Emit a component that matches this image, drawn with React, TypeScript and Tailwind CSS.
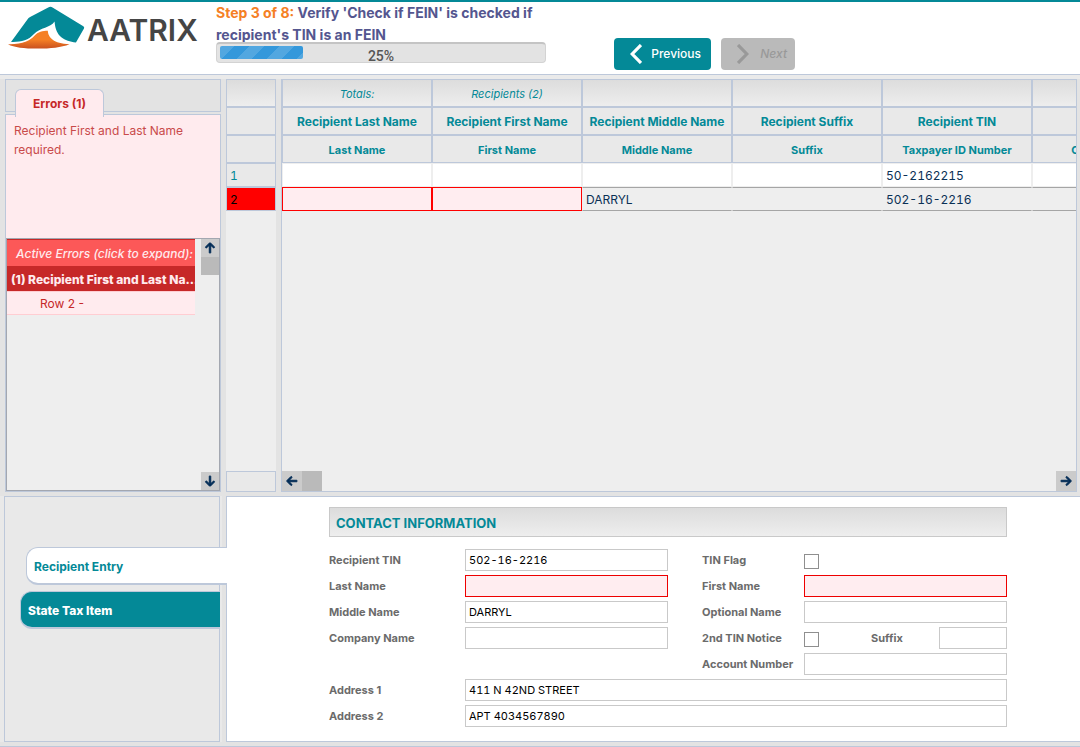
import React, { useState } from "react"
import { FaArrowDown, FaArrowLeft, FaArrowRight, FaArrowUp } from "react-icons/fa6";

type Column = {
    title: string;
    label: string;
    total?: string;
};

const COLUMNS: Column[] = [
    { title: "Recipient Last Name", label: "Last Name", total: "Totals:" },
    { title: "Recipient First Name", label: "First Name", total: "Recipients (2)" },
    { title: "Recipient Middle Name", label: "Middle Name" },
    { title: "Recipient Suffix", label: "Suffix" },
    { title: "Recipient TIN", label: "Taxpayer ID Number" },
    { title: "", label: "Check if FEIN" },
];

const ROWS = [
    ["", "", "", "", "50-2162215", ""],
    ["", "", "DARRYL", "", "502-16-2216", ""],
];

const headCell = "h-7 border border-[#bdc8da] px-0 pt-0.5 pb-0 text-center whitespace-nowrap text-[#048997]";
const scrollButton = "flex items-center justify-center bg-[#cbcbcb] text-[#002b55] text-xs";
const arrow = "stroke-current stroke-40";

function Logo() {
    return (
        <div className="flex w-52 shrink-0 items-start pl-2 pt-1">
            <svg className="h-[43px] w-[77px]" viewBox="22 18 230 128" aria-hidden="true">
                <defs>
                    <linearGradient id="flame" x1="0" y1="0" x2="0" y2="1">
                        <stop offset="0.5" stopColor="#f58025" />
                        <stop offset="1" stopColor="#c9501f" />
                    </linearGradient>
                </defs>
                <path fill="#048997" d="M31 125 L80 58 Q83 54 88 51 L145 21 Q150 19 155 22 L247 78 Q251 81 249 85 L225 127 C190 121 165 112 161 64 C148 84 120 80 98 103 C83 120 60 126 31 125Z" />
                <path fill="url(#flame)" d="M22 132 C65 133 88 122 101 107 C111 95 126 92 141 92 C142 112 158 131 206 132 C180 142 150 145 110 145 C70 145 40 142 22 132Z" />
            </svg>
            <span className="ml-0.5 pt-2 text-3xl leading-8 font-semibold text-[#454545]">AATRIX</span>
        </div>
    )
}

function Header() {
    return (
        <header className="flex h-[75px] shrink-0 border-t-2 border-b border-t-[#048997] border-b-[#bdc8da] bg-white">
            <Logo />
            <div className="ml-2 w-[330px] shrink-0">
                <h1 className="text-sm leading-[22px] font-bold text-[#54568f]">
                    <span className="text-[#f58025]">Step 3 of 8:</span> Verify 'Check if FEIN' is checked if recipient's TIN is an FEIN
                </h1>
                <div className="relative -mt-1 flex h-[21px] rounded-sm border border-t-2 border-[#d3d3d3] border-t-[#c4c4c4] bg-[#e3e3e3] px-[3px] py-0.5">
                    <div className="h-[13px] w-[83px] rounded-xs bg-[#3498db] bg-[linear-gradient(135deg,#ffffff26_25%,transparent_25%,transparent_50%,#ffffff26_50%,#ffffff26_75%,transparent_75%)] bg-size-[30px_30px]" />
                    <span className="absolute inset-x-0 top-0.5 text-center font-['Roboto',sans-serif] text-sm leading-5 font-medium text-[#555]">25%</span>
                </div>
            </div>
            <div className="ml-17 flex items-start gap-2.5 pt-9">
                <button className="flex h-8 w-[97px] items-center justify-between rounded-sm bg-[#048997] pr-2.5 pl-4 text-xs font-medium text-white">
                    <svg className="h-5 w-3" viewBox="0 0 12 20" fill="none" stroke="currentColor" strokeWidth="3.2" aria-hidden="true">
                        <path d="M11 1 L2.2 10 L11 19" />
                    </svg>
                    Previous
                </button>
                <button className="flex h-8 w-[74px] items-center justify-between rounded-sm bg-[#bababa] pr-2 pl-4 text-xs font-medium text-[#999] italic" disabled>
                    <svg className="h-5 w-3" viewBox="0 0 12 20" fill="none" stroke="currentColor" strokeWidth="3.2" aria-hidden="true">
                        <path d="M1 1 L9.8 10 L1 19" />
                    </svg>
                    Next
                </button>
            </div>
        </header>
    )
}

function ErrorPanel() {
    return (
        <aside className="flex w-[216px] shrink-0 flex-col">
            <div className="h-[33px] shrink-0 border border-[#bdc8da] px-[9px] pt-[9px]">
                <button className="relative h-7 w-[89px] rounded-t-md border border-b-0 border-[#bdc8da] bg-[#ffebee] text-xs font-bold text-[#c62828]">Errors (1)</button>
            </div>
            <div className="mt-0.5 flex grow flex-col border border-[#bdc8da] bg-[#ffebee]">
                <p className="h-[123px] shrink-0 px-2 pt-1.5 text-xs leading-[19px] text-[#c94a4a]">Recipient First and Last Name required.</p>
                <div className="flex grow border border-[#a3a7b0] bg-[#eee]">
                    <div className="min-w-0 grow text-xs">
                        <div className="h-[27px] border-t border-[#c62828] bg-[#fc5858] pr-0.5 text-right leading-7 font-medium whitespace-nowrap text-[#ffebee] italic">Active Errors (click to expand):</div>
                        <button className="block h-[25px] w-full overflow-hidden bg-[#c62828] pl-1 text-left leading-[27px] font-extrabold whitespace-nowrap text-[#ffebee]">(1) Recipient First and Last Na...</button>
                        <button className="block h-6 w-full border-y border-[#ffcdd2] bg-[#ffebee] pt-0.5 pl-[33px] text-left text-[#c62828]">Row 2 -</button>
                    </div>
                    <div className="ml-1.5 flex w-[18px] shrink-0 flex-col">
                        <button className={`h-[18px] ${scrollButton}`} aria-label="Scroll up"><FaArrowUp className={arrow} /></button>
                        <div className="h-[18px] bg-[#bababa]" />
                        <button className={`mt-auto h-[18px] ${scrollButton}`} aria-label="Scroll down"><FaArrowDown className={arrow} /></button>
                    </div>
                </div>
            </div>
        </aside>
    )
}

function RowNumbers() {
    return (
        <div className="flex w-[50px] shrink-0 flex-col bg-[#eee] text-xs text-[#048997] tabular-nums">
            <div className="h-7 border border-[#bdc8da] bg-linear-to-b from-[#dcdcdc] to-[#eee]" />
            <div className="h-7 border border-[#bdc8da] bg-[#e9e9e9]" />
            <div className="h-7 border border-[#bdc8da] bg-[#e9e9e9]" />
            <div className="h-6 border border-[#bdc8da] bg-[#e9e9e9] pl-[3px] leading-6">1</div>
            <div className="h-6 border border-[#bdc8da] bg-[#f00] pl-[3px] leading-6 text-black">2</div>
            <div className="mt-auto h-[21px] border border-[#bdc8da] bg-[#e9e9e9]" />
        </div>
    )
}

function RecipientGrid() {
    const cellStyle = (row: number, col: number) => {
        if (row === 0)
            return "border-[#eee] bg-white";
        if (col < 2)
            return "border-[#f00] bg-[#ffedf0]";
        return "border-x-[#eee] border-y-[#a5a5a5] bg-[#eee]";
    };

    return (
        <div className="flex min-w-0 grow flex-col overflow-hidden border-x border-b border-[#bdc8da] bg-[#eee]">
            <table className="w-[900px] table-fixed border-separate border-spacing-0">
                <thead>
                    <tr className="bg-linear-to-b from-[#dcdcdc] to-[#eee] text-[11px] italic">
                        {COLUMNS.map((c, key) => <td className={headCell} key={key}>{c.total}</td>)}
                    </tr>
                    <tr className="bg-[#e9e9e9] text-xs">
                        {COLUMNS.map((c, key) => <th className={`${headCell} font-bold`} key={key}>{c.title}</th>)}
                    </tr>
                    <tr className="bg-[#e9e9e9] text-[11px]">
                        {COLUMNS.map((c, key) => <th className={`${headCell} font-bold`} key={key}>{c.label}</th>)}
                    </tr>
                </thead>
                <tbody className="text-xs text-[#0a3055] tabular-nums">
                    {ROWS.map((row, r) => (
                        <tr key={r}>
                            {row.map((value, c) => <td className={`h-6 border px-[3px] pt-0.5 pb-0 ${cellStyle(r, c)}`} key={c}>{value}</td>)}
                        </tr>
                    ))}
                </tbody>
            </table>
            <div className="mt-auto flex h-5 shrink-0">
                <button className={`w-5 ${scrollButton}`} aria-label="Scroll left"><FaArrowLeft className={arrow} /></button>
                <div className="w-5 bg-[#bababa]" />
                <button className={`ml-auto w-5 ${scrollButton}`} aria-label="Scroll right"><FaArrowRight className={arrow} /></button>
            </div>
        </div>
    )
}

function SideTabs() {
    return (
        <nav className="w-[222px] shrink-0 bg-[#e9e9e9] pr-0.5 pl-1">
            <div className="flex h-full flex-col items-end gap-1.5 border border-[#bdc8da] pt-[50px] text-xs">
                <button className="relative -mr-2 h-[38px] w-[201px] shrink-0 rounded-l-xl border border-r-0 border-b-2 border-[#bdc8da] bg-white pt-0.5 pl-[7px] text-left font-bold text-[#048997]">Recipient Entry</button>
                <button className="relative -mr-px h-[38px] w-[200px] shrink-0 rounded-l-xl border border-r-0 border-b-2 border-[#bdc8da] bg-[#048997] pt-0.5 pl-[7px] text-left font-extrabold text-white">State Tax Item</button>
            </div>
        </nav>
    )
}

type FieldProps = {
    label: string;
    id: string;
    value?: string;
    error?: boolean;
    inputClass?: string;
    labelClass?: string;
};

function Field({ label, id, value = "", error, inputClass = "", labelClass = "" }: FieldProps) {
    const [text, setText] = useState(value);

    return (
        <>
            <label className={labelClass} htmlFor={id}>{label}</label>
            <input
                className={`h-[22px] w-full min-w-0 border px-[3px] text-[11px] font-normal text-black tabular-nums outline-none ${error ? "border-[#e00] bg-[#ffedf0]" : "border-[#c9c9c9] bg-white"} ${inputClass}`}
                id={id}
                value={text}
                onChange={(e) => setText(e.target.value)}
            />
        </>
    )
}

const checkbox = "mt-0.5 size-[15px] shrink-0 appearance-none border border-[#8f8f8f] bg-white checked:bg-[#048997]";

function ContactForm() {
    return (
        <form className="min-w-0 grow border border-r-0 border-[#bdc8da] bg-white pt-2.5 pr-[73px] pl-[102px]">
            <h2 className="h-[30px] border border-[#c9c9c9] bg-linear-to-b from-[#dcdcdc] to-[#eee] pl-1.5 text-[13px] leading-[31px] font-bold text-[#048997]">CONTACT INFORMATION</h2>
            <div className="mt-3 grid grid-cols-[136px_1fr_34px_102px_1fr] items-center gap-y-1 text-[11px] font-bold text-[#6b6b6b]">
                <Field label="Recipient TIN" id="tin" value="502-16-2216" />
                <label className="col-start-4" htmlFor="tin-flag">TIN Flag</label>
                <input className={checkbox} id="tin-flag" type="checkbox" />

                <Field label="Last Name" id="last" error />
                <Field label="First Name" id="first" error labelClass="col-start-4" />

                <Field label="Middle Name" id="middle" value="DARRYL" />
                <Field label="Optional Name" id="optional" labelClass="col-start-4" />

                <Field label="Company Name" id="company" />
                <label className="col-start-4" htmlFor="notice">2nd TIN Notice</label>
                <div className="flex items-center">
                    <input className={checkbox} id="notice" type="checkbox" />
                    <label className="ml-auto w-17" htmlFor="suffix">Suffix</label>
                    <input className="h-[22px] w-17 border border-[#c9c9c9] px-[3px] font-normal text-black outline-none" id="suffix" />
                </div>

                <Field label="Account Number" id="account" labelClass="col-start-4" />

                <Field label="Address 1" id="address1" value="411 N 42ND STREET" inputClass="col-span-4" />
                <Field label="Address 2" id="address2" value="APT 4034567890" inputClass="col-span-4" />
            </div>
        </form>
    )
}

export default function App() {
    return (
        <div className="flex min-h-screen flex-col border-b border-[#bdc8da] bg-[#e3e3e3] font-['Inter',sans-serif]">
            <Header />
            {/* Errors and recipients */}
            <main className="flex grow gap-[5px] border-t-4 border-[#eaeaea] pr-[3px] pl-[5px]">
                <ErrorPanel />
                <RowNumbers />
                <RecipientGrid />
            </main>
            {/* Entry form */}
            <section className="my-1 flex min-h-[246px] shrink-0 gap-1">
                <SideTabs />
                <ContactForm />
            </section>
        </div>
    )
}
